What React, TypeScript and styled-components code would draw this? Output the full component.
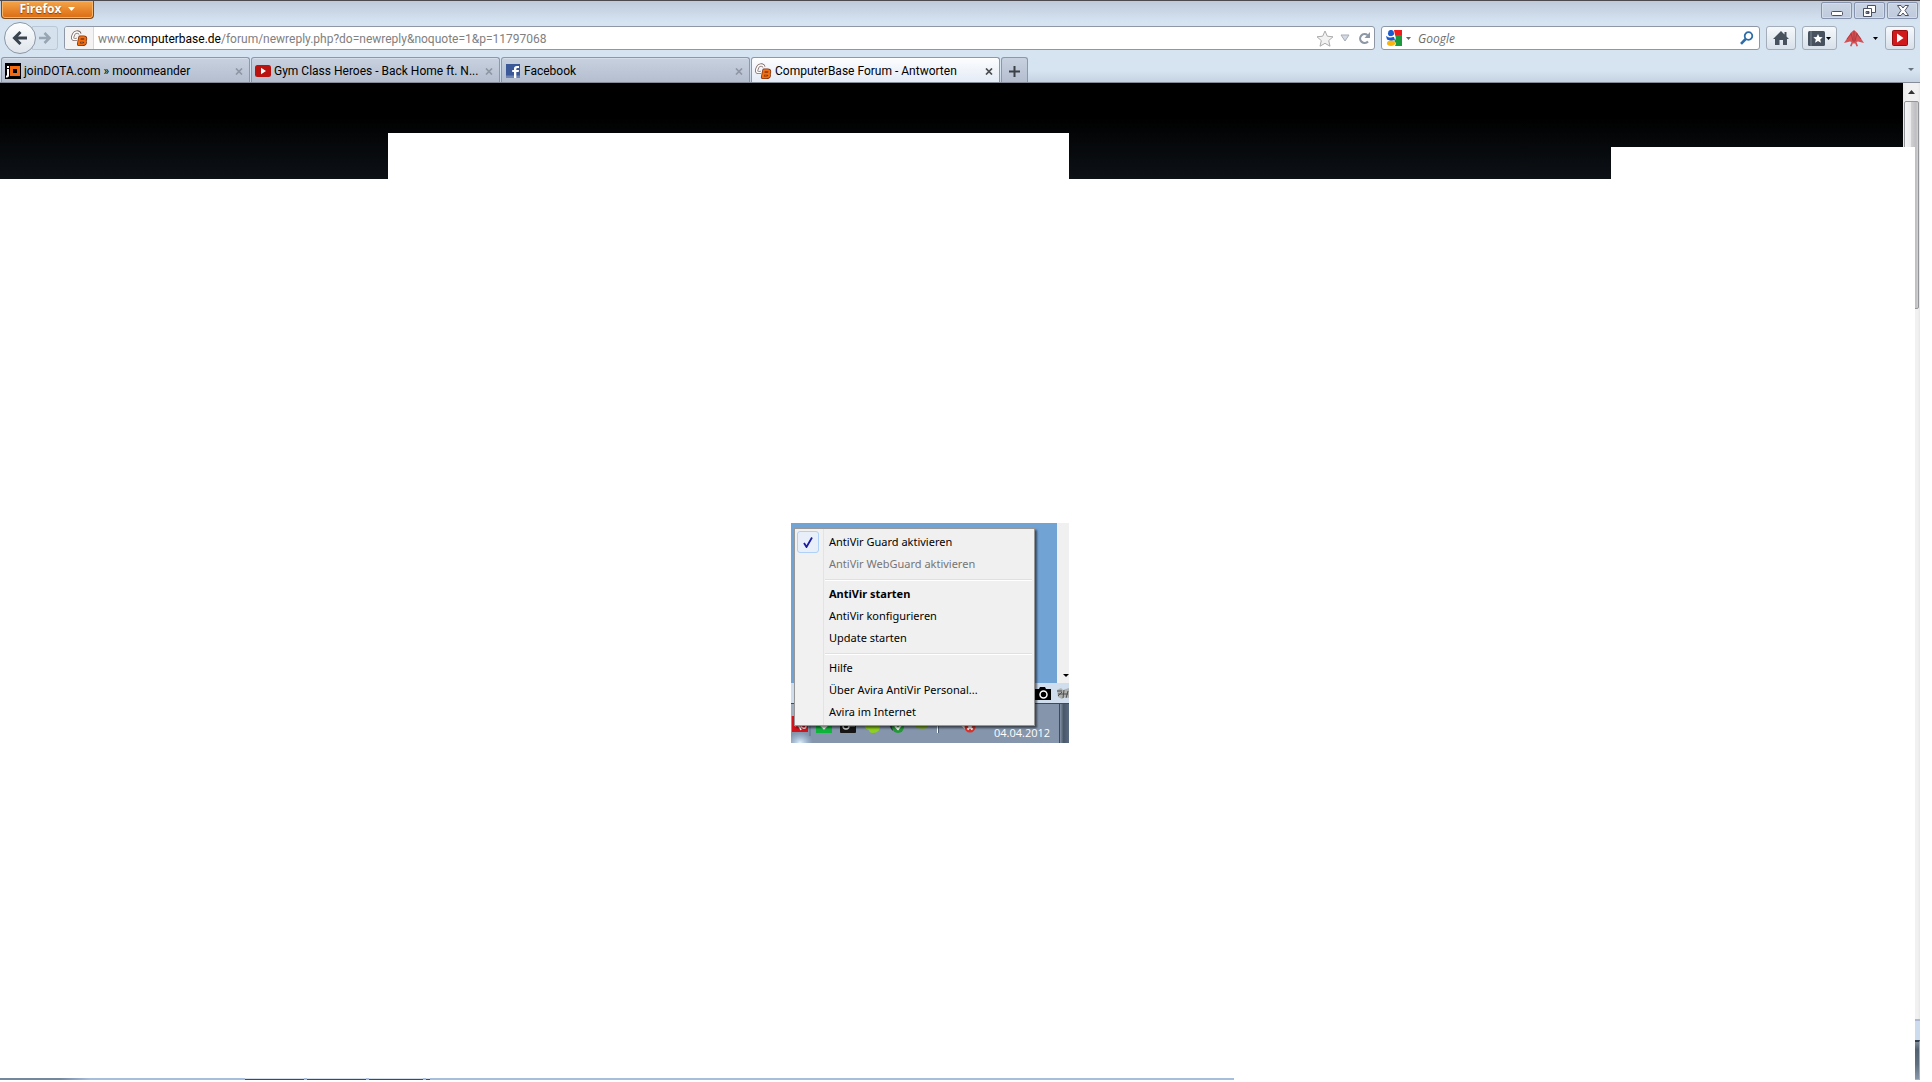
import React from 'react';
import styled, { createGlobalStyle } from 'styled-components';

const Global = createGlobalStyle`
  *, *::before, *::after { box-sizing: border-box; }
  button, input { font: inherit; color: inherit; padding: 0; margin: 0; border: 0; background: none; }
  body { margin: 0; background: #fff; color: #000; font: 11px/16px "Noto Sans", "Open Sans", sans-serif; }
`;

const Desktop = styled.div`
  display: flex;
  flex-direction: column;
  min-height: 100vh;
  padding: 0 12px 2px 0;
`;

const Chrome = styled.header`
  display: flex;
  flex-direction: column;
  height: 83px;
  border-top: 1px solid #4c4a4f;
  border-bottom: 1px solid #868c98;
  background: linear-gradient(#bfc9da 0, #d6e4f2 21px, #d6e4f2 70px, #c5d2e1 100%);
  font-family: Roboto, "Open Sans", sans-serif;
  font-size: 12px;
`;

const TitleRow = styled.div`
  display: flex;
  justify-content: space-between;
  height: 21px;
  padding: 0 2px 0 1px;
`;

const FirefoxButton = styled.button`
  display: flex;
  align-items: center;
  justify-content: center;
  gap: 7px;
  width: 93px;
  height: 18px;
  padding-bottom: 2px;
  border: 1px solid #7b4a1d;
  border-top: 0;
  border-radius: 0 0 4px 4px;
  background: linear-gradient(#f3a64b, #e7842a 55%, #dc6c12);
  box-shadow: inset 0 0 0 1px #f5b56a;
  color: #fff;
  font-family: "Open Sans", sans-serif;
  font-weight: 700;
  text-shadow: 0 1px 1px #8a3d00;
`;

const WindowButtons = styled.div`
  display: flex;
  gap: 2px;
  padding-top: 1px;
`;

const WindowButton = styled.button`
  display: grid;
  place-items: center;
  width: 31px;
  height: 17px;
  border: 1px solid #8693ae;
  border-radius: 2px;
  background: linear-gradient(#c9d3e3, #bfcbdd);
  box-shadow: inset 0 0 0 1px #d3dce9;
`;

const NavRow = styled.nav`
  display: flex;
  align-items: center;
  height: 32px;
  padding: 0 5px 0 4px;
`;

const BackButton = styled.button`
  display: grid;
  place-items: center;
  width: 32px;
  height: 32px;
  border: 1px solid #8c97a6;
  border-radius: 50%;
  background: linear-gradient(#fdfefe, #dfe5ec);
  z-index: 1;
`;

const ForwardButton = styled.button`
  display: grid;
  place-items: center;
  width: 26px;
  height: 24px;
  margin: 0 6px 0 -4px;
  border: 1px solid #b9c7d6;
  border-radius: 0 3px 3px 0;
  background: #d5e1ed;
`;

const Field = styled.div<{ $grow?: boolean }>`
  display: flex;
  align-items: center;
  flex: ${(p) => (p.$grow ? '1 1 0' : '0 1 379px')};
  height: 24px;
  border: 1px solid #8d97a5;
  border-radius: 3px;
  background: #fff;
  overflow: hidden;
`;

const Identity = styled.button`
  display: grid;
  place-items: center;
  width: 29px;
  height: 22px;
  margin-right: 4px;
  border-right: 1px solid #d9d9d9;
  background: #f3f3f3;
`;

const Address = styled.a`
  flex: 1;
  padding-top: 2px;
  color: #808080;
  text-decoration: none;
  white-space: nowrap;
  b { font-weight: 400; color: #000; }
`;

const FieldButton = styled.button<{ $w: number }>`
  display: grid;
  place-items: center;
  width: ${(p) => p.$w}px;
  height: 22px;
`;

const SearchInput = styled.input`
  flex: 1;
  min-width: 0;
  padding-top: 2px;
  font-family: "Open Sans", sans-serif;
  font-style: italic;
  outline: 0;
  &::placeholder { color: #6d6d6d; opacity: 1; }
`;

const ToolGap = styled.span`
  width: 6px;
`;

const EngineMark = styled.span`
  display: flex;
  align-items: center;
  gap: 4px;
  padding-right: 3px;
`;

const ToolButton = styled.button<{ $w: number; $flat?: boolean }>`
  display: flex;
  align-items: center;
  justify-content: center;
  gap: 1px;
  width: ${(p) => p.$w}px;
  height: 24px;
  margin-left: 6px;
  border: 1px solid ${(p) => (p.$flat ? 'transparent' : '#a3acb9')};
  border-radius: 3px;
  background: ${(p) => (p.$flat ? 'none' : 'linear-gradient(#f6f9fc, #d8e0ea)')};
`;

const ExtensionCaret = styled.span`
  display: flex;
  padding-left: 8px;
`;

const TabRow = styled.div`
  display: flex;
  align-items: flex-end;
  gap: 1px;
  flex: 1;
  padding: 0 6px 0 1px;
`;

const Tab = styled.div<{ $active?: boolean }>`
  display: flex;
  align-items: center;
  flex: 0 1 249px;
  min-width: 0;
  height: 25px;
  border: 1px solid #8c97a7;
  border-bottom: 0;
  border-radius: 3px 3px 0 0;
  background: ${(p) => (p.$active ? 'linear-gradient(#fcfdfe, #e4ebf6)' : 'linear-gradient(#c7d1df, #b4becf)')};
  box-shadow: inset 0 1px 0 ${(p) => (p.$active ? '#fff' : '#d5dde8')};
`;

const TabLabel = styled.button`
  display: flex;
  align-items: center;
  flex: 1;
  gap: 3px;
  min-width: 0;
  padding: 2px 0 0 3px;
  white-space: nowrap;
  text-align: left;
  svg { flex: none; }
`;

const TabClose = styled.button<{ $active?: boolean }>`
  display: grid;
  place-items: center;
  width: 20px;
  height: 22px;
  padding-top: 2px;
  color: ${(p) => (p.$active ? '#4a4d52' : '#8e97a3')};
`;

const NewTab = styled.button`
  display: grid;
  place-items: center;
  width: 27px;
  height: 25px;
  padding-top: 2px;
  border: 1px solid #8c97a7;
  border-bottom: 0;
  border-radius: 3px 3px 0 0;
  background: linear-gradient(#c7d1df, #b4becf);
`;

const ListTabs = styled.button`
  display: grid;
  place-items: center;
  width: 7px;
  height: 25px;
  margin-left: auto;
`;

const Page = styled.div`
  position: relative;
  display: flex;
  flex: 1;
`;

const Content = styled.main`
  display: flex;
  flex-direction: column;
  flex: 1;
  min-width: 0;
`;

const Banner = styled.div`
  height: 96px;
  padding: 50px 0 0 388px;
  background: linear-gradient(#000 35%, #0d1217);
`;

const BannerGap = styled.div`
  width: 681px;
  height: 46px;
  background: #fff;
`;

const Cover = styled.div`
  position: absolute;
  top: 64px;
  right: 5px;
  bottom: 0;
  width: 304px;
  background: #fff;
`;

const Rail = styled.aside`
  display: flex;
  flex-direction: column;
  width: 17px;
  background: linear-gradient(90deg, #e8e8e8, #f1f1f1 4px, #f1f1f1 15px, #e6e6e6);
`;

const RailArrow = styled.button`
  display: grid;
  place-items: center;
  height: 18px;
`;

const Thumb = styled.div`
  height: 208px;
  margin: 0 1px;
  border: 1px solid #949599;
  border-radius: 2px;
  background: linear-gradient(90deg, #f5f5f5, #e9e9eb 45%, #cfcfd2 50%, #bebec2 85%, #d4d4d6);
`;

const RailStatus = styled.div`
  height: 21px;
  margin-top: auto;
  border-top: 2px solid #adb9d0;
  background: #cddbee;
`;

const RailDesktop = styled.div`
  height: 40px;
  border: 1px solid #a6b0bb;
  border-top: 2px solid #333d4b;
  background: linear-gradient(#7d8b9a, #52606f 20%, #5f6f80 60%, #8796a8);
`;

const Shot = styled.section`
  position: relative;
  display: flex;
  flex-direction: column;
  width: 278px;
  height: 220px;
  margin: 344px 0 0 791px;
  overflow: hidden;
`;

const ShotTop = styled.div`
  display: flex;
  align-items: flex-end;
  justify-content: flex-end;
  height: 160px;
  background: #72a3d5;
`;

const ShotScroll = styled.div`
  display: flex;
  align-items: flex-end;
  justify-content: flex-end;
  width: 12px;
  height: 160px;
  padding-bottom: 6px;
  background: #f0f0f0;
`;

const ShotStatus = styled.div`
  display: flex;
  align-items: center;
  justify-content: flex-end;
  height: 20px;
  background: #d0dded;
`;

const Tray = styled.div`
  display: flex;
  height: 40px;
  border-top: 1px solid #3c4b60;
  background: #8495ac;
`;

const Clock = styled.time`
  width: 65px;
  padding-top: 21px;
  color: #fff;
  font-family: "Open Sans", sans-serif;
`;

const ShowDesktop = styled.button`
  width: 10px;
  height: 39px;
  border-left: 1px solid #3f4b5a;
  background: linear-gradient(90deg, #8493a6, #48566a 40%, #5b6b80);
`;

const Menu = styled.ul`
  position: absolute;
  left: 3px;
  top: 5px;
  width: 241px;
  margin: 0;
  padding: 2px;
  list-style: none;
  border: 1px solid #979797;
  background: linear-gradient(90deg, #f1f1f1 28px, #e2e3e3 28px, #e2e3e3 29px, #f0f0f0 29px);
  box-shadow: 2px 2px 2px rgba(0, 0, 0, 0.55);
`;

const MenuItem = styled.button<{ $bold?: boolean }>`
  display: flex;
  align-items: center;
  gap: 10px;
  width: 100%;
  height: 22px;
  font-weight: ${(p) => (p.$bold ? 700 : 400)};
  white-space: nowrap;
  &:disabled { color: #757575; }
`;

const CheckSlot = styled.span<{ $on?: boolean }>`
  display: grid;
  place-items: center;
  width: 22px;
  height: 22px;
  border: 1px solid ${(p) => (p.$on ? '#afd0f7' : 'transparent')};
  border-radius: 3px;
  background: ${(p) => (p.$on ? '#e8eff8' : 'none')};
`;

const Separator = styled.li`
  height: 8px;
  padding: 4px 0 0 28px;
  &::before {
    content: '';
    display: block;
    height: 2px;
    border-top: 1px solid #e0e0e0;
    border-bottom: 1px solid #fff;
  }
`;

const Strip = styled.footer`
  display: flex;
  gap: 3px;
  width: 1234px;
  max-width: 100%;
  height: 2px;
  margin-top: auto;
  padding-left: 245px;
  background: linear-gradient(90deg, #74879f 0, #74879f 60px, #a6bedd 90px);
`;

const StripTab = styled.div<{ $w: number }>`
  width: ${(p) => p.$w}px;
  height: 2px;
  border-top: 1px solid #d5dfec;
  background: #3f4a5c;
`;

const Caret = ({ w = 6, color = '#000' }: { w?: number; color?: string }) => (
  <svg width={w} height={Math.ceil(w / 2)} viewBox="0 0 6 3" preserveAspectRatio="none">
    <path d="M0 0h6L3 3z" fill={color} />
  </svg>
);

const C_SHAPE = 'M9 4Q8.200 1.600 5.600 2T2 5.800 2.800 9.400 6 9.400';
const B_SHAPE = 'M9 7.200L7.600 14.400h3.600q2.800 0 3-1.900.1-1.700-1.800-1.700H8.600h3.600q2.200-.2 2.300-2 0-1.600-1.900-1.600z';

const CbIcon = () => (
  <svg width="17" height="17" viewBox="0 0 17 17" fill="none" strokeLinejoin="round">
    <path d={C_SHAPE} stroke="#7d6763" strokeWidth="3.200" />
    <path d={C_SHAPE} stroke="#fff" strokeWidth="1.600" />
    <path d={B_SHAPE} stroke="#7d3312" strokeWidth="3.400" />
    <path d={B_SHAPE} stroke="#f4700f" strokeWidth="1.900" />
  </svg>
);

const JdIcon = () => (
  <svg width="16" height="16" viewBox="0 0 16 16">
    <path d="M0 0h16v16H0z" />
    <path d="M2 3h2v2H2zM2 6h2v6.500q0 2-3 2v-1.700q1 0 1-.8z" fill="#fff" />
    <path d="M5 3h10v10H5zM8 6v4h4V6z" fill="#f26a12" fillRule="evenodd" />
  </svg>
);

const YtIcon = () => (
  <svg width="16" height="16" viewBox="0 0 16 16">
    <rect y="2" width="16" height="12" rx="2.500" fill="#b9120f" />
    <path d="M6 4.800v6.400L11 8z" fill="#fff" />
  </svg>
);

const FbIcon = () => (
  <svg width="16" height="16" viewBox="0 0 16 16">
    <path d="M1 1h14v14H1z" fill="#3b5998" />
    <path d="M1 12.500h14V15H1z" fill="#6d84b4" />
    <path d="M9 15V9H7.200V7H9V5.500Q9 3 11.800 3H14v2h-1.500q-1.200 0-1.200 1v1H14l-.3 2h-2.400v6z" fill="#fff" />
  </svg>
);

const GoogleIcon = () => (
  <svg width="16" height="16" viewBox="0 0 16 16">
    <path d="M8 0h8v5H9z" fill="#ee1c1c" />
    <path d="M9 5h7v11H9q2-3-1-5 3-2 1-6z" fill="#1a9a3c" />
    <ellipse cx="5" cy="3.200" rx="3" ry="3.300" fill="#1b5bd0" />
    <path d="M0 6l3 1.500 5-.5 1 3-4 1-4-1.500z" fill="#1b5bd0" />
    <path d="M2 6.200q3 1.800 6-.7" stroke="#fff" fill="none" />
    <ellipse cx="5" cy="13.300" rx="4" ry="2.700" fill="#f9b50b" />
  </svg>
);

const Cross = () => (
  <svg width="8" height="7" viewBox="0 0 8 7">
    <path d="M1 .5l6 6M7 .5l-6 6" stroke="currentColor" strokeWidth="1.700" />
  </svg>
);

const TrayIcons = () => (
  <svg width="203" height="39" viewBox="0 0 203 39">
    <defs>
      <radialGradient id="glow">
        <stop offset="0" stopColor="#e4f3ff" />
        <stop offset="1" stopColor="#a9cbea" stopOpacity="0" />
      </radialGradient>
    </defs>
    <ellipse cx="9" cy="39" rx="13" ry="11" fill="url(#glow)" />
    <path d="M0 0h3v12H0z" fill="#a1aec0" />
    <rect x="1" y="12" width="16" height="16" fill="#d4141c" />
    <path d="M4 22c3-2 5 1 6 4M10 22c1 3 5 3 5 0" stroke="#fff" strokeWidth="1.500" fill="none" />
    <path d="M19 20v12" stroke="#5f7188" />
    <rect x="25" y="12" width="16" height="17" fill="#0fb53b" />
    <path d="M29 20l4 4 6-6" stroke="#fff" strokeWidth="2.500" fill="none" />
    <rect x="49" y="12" width="16" height="17" rx="1" fill="#151515" />
    <circle cx="55" cy="22" r="3" stroke="#ddd" strokeWidth="1.500" fill="none" />
    <path d="M58 22h6" stroke="#ccc" />
    <path d="M74 22q8-6 15 0 0 7-7 7-4 0-4-3-4-1-4-4z" fill="#8ed01e" />
    <path d="M98 20h4v7l-2-2z" fill="#333d49" />
    <circle cx="107" cy="23" r="6" fill="#239a36" />
    <path d="M104 22l3 3 4-5" stroke="#fff" strokeWidth="2" fill="none" />
    <path d="M124 21h12v3q-6 2-12-1z" fill="#7fb414" />
    <path d="M146.500 20v9" stroke="#fff" strokeWidth="1" />
    <path d="M147.500 20v9" stroke="#4f5e71" />
    <path d="M168 20l6 5v-5z" fill="#fff" />
    <circle cx="179" cy="23" r="5.500" fill="#d8322b" />
    <path d="M176.500 20.500l5 5m0-5l-5 5" stroke="#fff" strokeWidth="1.800" />
  </svg>
);

const tabs = [
  { label: 'joinDOTA.com » moonmeander', icon: <JdIcon /> },
  { label: 'Gym Class Heroes - Back Home ft. N...', icon: <YtIcon /> },
  { label: 'Facebook', icon: <FbIcon /> },
  { label: 'ComputerBase Forum - Antworten', icon: <CbIcon />, active: true },
];

type Entry = { label: string; checked?: boolean; disabled?: boolean; bold?: boolean } | null;

const entries: Entry[] = [
  { label: 'AntiVir Guard aktivieren', checked: true },
  { label: 'AntiVir WebGuard aktivieren', disabled: true },
  null,
  { label: 'AntiVir starten', bold: true },
  { label: 'AntiVir konfigurieren' },
  { label: 'Update starten' },
  null,
  { label: 'Hilfe' },
  { label: 'Über Avira AntiVir Personal...' },
  { label: 'Avira im Internet' },
];

export default function App() {
  return (
    <Desktop>
      <Global />
      <Chrome>
        <TitleRow>
          <FirefoxButton>
            Firefox <Caret w={7} color="#fff" />
          </FirefoxButton>
          <WindowButtons>
            <WindowButton aria-label="Minimieren">
              <svg width="12" height="12" viewBox="0 0 12 12">
                <rect x=".5" y="6.500" width="11" height="4" rx="1" fill="#fff" stroke="#4b5063" />
              </svg>
            </WindowButton>
            <WindowButton aria-label="Verkleinern">
              <svg width="13" height="12" viewBox="0 0 13 12" fill="#fff" stroke="#4b5063">
                <path d="M4.500.5h8v7h-8z" />
                <path d="M.5 3.500h8v8h-8zM3 6.500h3v2H3z" fillRule="evenodd" />
              </svg>
            </WindowButton>
            <WindowButton aria-label="Schließen">
              <svg width="12" height="11" viewBox="0 0 12 11">
                <path d="M.5.5h3.500l2 2.500 2-2.500h3.500L8 5.500l3.500 5H8L6 8l-2 2.500H.5L4 5.500z" fill="#fff" stroke="#4b5063" />
              </svg>
            </WindowButton>
          </WindowButtons>
        </TitleRow>

        <NavRow>
          <BackButton aria-label="Zurück">
            <svg width="16" height="14" viewBox="0 0 16 14" fill="none" stroke="#3a444e" strokeWidth="3">
              <path d="M8.500 1L2.500 7l6 6M3 7h12" />
            </svg>
          </BackButton>
          <ForwardButton aria-label="Vor">
            <svg width="12" height="12" viewBox="0 0 12 12" fill="none" stroke="#98a5b2" strokeWidth="2.600">
              <path d="M5.500 1l5 5-5 5M0 6h10" />
            </svg>
          </ForwardButton>
          <Field $grow>
            <Identity aria-label="Seiteninformation">
              <CbIcon />
            </Identity>
            <Address href="#">
              www.<b>computerbase.de</b>/forum/newreply.php?do=newreply&amp;noquote=1&amp;p=11797068
            </Address>
            <FieldButton $w={22} aria-label="Lesezeichen">
              <svg width="18" height="17" viewBox="0 0 18 17">
                <path d="M9 1l2.300 5.200 5.700.6-4.300 3.800 1.300 5.600L9 13.300l-5 2.900 1.300-5.600L1 6.800l5.700-.6z" fill="#f2f2f2" stroke="#aaa" />
              </svg>
            </FieldButton>
            <FieldButton $w={18} aria-label="Verlauf">
              <svg width="10" height="8" viewBox="0 0 10 8">
                <path d="M1 1h8L5 7z" fill="#d3dae4" stroke="#a5adb8" />
              </svg>
            </FieldButton>
            <FieldButton $w={20} aria-label="Neu laden">
              <svg width="13" height="13" viewBox="0 0 13 13">
                <path d="M10 9.500A4.500 4.500 0 1 1 9.500 3" fill="none" stroke="#8e98a4" strokeWidth="2.200" />
                <path d="M12 0v6H6.500z" fill="#8e98a4" />
              </svg>
            </FieldButton>
          </Field>
          <ToolGap />
          <Field>
            <FieldButton $w={36} aria-label="Suchmaschine">
              <EngineMark>
                <GoogleIcon />
                <Caret w={5} color="#666" />
              </EngineMark>
            </FieldButton>
            <SearchInput aria-label="Suche" placeholder="Google" />
            <FieldButton $w={24} aria-label="Suchen">
              <svg width="14" height="14" viewBox="0 0 14 14" fill="none" stroke="#2d6ca8">
                <circle cx="8.500" cy="5" r="3.800" strokeWidth="1.800" />
                <path d="M5.700 8L1 12.800" strokeWidth="2.600" />
              </svg>
            </FieldButton>
          </Field>
          <ToolButton $w={30} aria-label="Startseite">
            <svg width="16" height="14" viewBox="0 0 16 14">
              <path d="M8 0l3.500 3.500V1h2v4.500L16 8h-2v6h-4V9H6.500v5H2V8H0z" fill="#48525e" />
            </svg>
          </ToolButton>
          <ToolButton $w={35} aria-label="Lesezeichen anzeigen">
            <svg width="17" height="15" viewBox="0 0 17 15">
              <rect width="17" height="15" rx="1.500" fill="#48525e" />
              <path d="M3 0v15" stroke="#7c8793" />
              <path d="M10 3l1.400 3 3.300.3-2.500 2.200.8 3.200-3-1.700-3 1.700.8-3.200-2.500-2.200 3.300-.3z" fill="#fff" />
            </svg>
            <Caret w={5} />
          </ToolButton>
          <ToolButton $w={36} $flat aria-label="Erweiterung">
            <svg width="20" height="17" viewBox="0 0 20 17">
              <path d="M10 0l3 2.500L20 13l-6-1.500-1.500.5 1.500 4-1.500.5L11 13l-1 1-1-1-1.500 3.500L6 16l1.500-4-1.500-.5L0 13l7-10.500z" fill="#d65053" />
              <path d="M10 1v11M7 3l2 8M13 3l-2 8M3 9l4-5m10 5l-4-5" stroke="#a3333a" strokeWidth=".8" />
            </svg>
            <ExtensionCaret>
              <Caret w={5} />
            </ExtensionCaret>
          </ToolButton>
          <ToolButton $w={30} aria-label="Video">
            <svg width="16" height="16" viewBox="0 0 16 16">
              <rect x=".5" y=".5" width="15" height="15" rx="1" fill="#d11a1c" stroke="#960e10" />
              <path d="M5 3.500v9L11.500 8z" fill="#fff" />
            </svg>
          </ToolButton>
        </NavRow>

        <TabRow>
          {tabs.map((t) => (
            <Tab key={t.label} $active={t.active}>
              <TabLabel>
                {t.icon}
                {t.label}
              </TabLabel>
              <TabClose $active={t.active} aria-label={`${t.label} schließen`}>
                <Cross />
              </TabClose>
            </Tab>
          ))}
          <NewTab aria-label="Neuer Tab">
            <svg width="11" height="11" viewBox="0 0 11 11">
              <path d="M5.500 0v11M0 5.500h11" stroke="#3c4148" strokeWidth="2" />
            </svg>
          </NewTab>
          <ListTabs aria-label="Alle Tabs">
            <Caret color="#6a727d" />
          </ListTabs>
        </TabRow>
      </Chrome>

      <Page>
        <Content>
          <Banner>
            <BannerGap />
          </Banner>
          <Shot>
            <ShotTop>
              <ShotScroll>
                <Caret />
              </ShotScroll>
            </ShotTop>
            <ShotStatus>
              <svg width="34" height="20" viewBox="0 0 34 20">
                <path d="M0 6h4l1-2h5l1 2h5v11H0z" />
                <circle cx="8.500" cy="11.500" r="3.500" fill="none" stroke="#fff" strokeWidth="1.500" />
                <path d="M22 7l4-2 2 2 6-2v10l-4-1-3 2-4-2z" fill="#aeb0b0" />
                <path d="M22 8h5m-4 5l4-4m1 6l1-8m2 8l2-7m-10 3h10" stroke="#4f504e" />
              </svg>
            </ShotStatus>
            <Tray>
              <TrayIcons />
              <Clock>04.04.2012</Clock>
              <ShowDesktop aria-label="Desktop anzeigen" />
            </Tray>
            <Menu>
              {entries.map((e, i) =>
                e ? (
                  <li key={e.label}>
                    <MenuItem $bold={e.bold} disabled={e.disabled}>
                      <CheckSlot $on={e.checked}>
                        {e.checked && (
                          <svg width="10" height="11" viewBox="0 0 10 11">
                            <path d="M1 6l2.500 4L9 .5" fill="none" stroke="#1b1ba0" strokeWidth="1.800" />
                          </svg>
                        )}
                      </CheckSlot>
                      {e.label}
                    </MenuItem>
                  </li>
                ) : (
                  <Separator key={i} role="separator" />
                ),
              )}
            </Menu>
          </Shot>
          <Strip>
            <StripTab $w={59} />
            <StripTab $w={59} />
            <StripTab $w={54} />
            <StripTab $w={4} />
          </Strip>
        </Content>
        <Rail>
          <RailArrow aria-label="Nach oben">
            <svg width="7" height="4" viewBox="0 0 7 4">
              <path d="M0 4h7L3.500 0z" fill="#333" />
            </svg>
          </RailArrow>
          <Thumb />
          <RailStatus />
          <RailDesktop />
        </Rail>
        <Cover />
      </Page>
    </Desktop>
  );
}
